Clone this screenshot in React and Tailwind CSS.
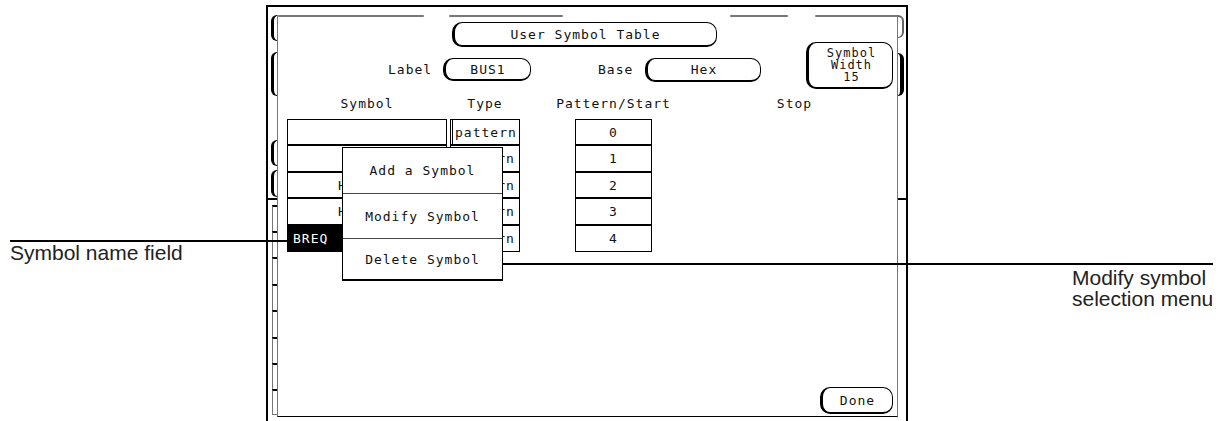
import React from 'react';

const screenFont = "font-['DejaVu_Sans_Mono',monospace] text-[13px] tracking-[1px] text-[#111] leading-none";

const Btn = ({ className = '', children }) => (
  <div className={`flex items-center justify-center rounded-[10px] border border-black border-l-[3px] border-b-2 ${className}`}>
    {children}
  </div>
);

const LeftGutter = () => {
  const boxes = [26, 26, 27, 26, 27, 26, 26, 26];
  return (
    <div className="w-[9px] flex flex-col">
      <div className="mt-[8px] ml-[3px] w-[6px] h-[26px] border-l-[3px] border-y border-black rounded-l-[8px]" />
      <div className="mt-[11px] ml-[3px] w-[6px] h-[44px] border-l-[3px] border-y border-black rounded-l-[8px]" />
      <div className="mt-[44px] ml-[3px] w-[6px] h-[26px] border-l-[3px] border-y border-black rounded-l-[8px]" />
      <div className="mt-[4px] ml-[3px] w-[6px] h-[27px] border-l-[3px] border-y border-black rounded-l-[8px]" />
      <div className="mt-[1px] h-[2px] w-[9px] bg-black" />
      <div className="mt-[5px] ml-[4px] flex flex-col">
        {boxes.map((h, i) => (
          <div
            key={i}
            className={`w-[6px] border-x border-[#777] border-t-2 border-t-black ${i === boxes.length - 1 ? 'border-b border-b-[#777]' : ''}`}
            style={{ height: h }}
          />
        ))}
      </div>
    </div>
  );
};

const RightGutter = () => (
  <div className="w-[8px] flex flex-col">
    <div className="mt-[8px] w-[6px] h-[23px] border-r-2 border-t-2 border-b border-[#666] rounded-r-[8px]" />
    <div className="mt-[15px] w-[6px] h-[43px] border-r-[4px] border-y border-black rounded-r-[9px]" />
    <div className="mt-[102px] h-[2px] w-[8px] bg-black" />
  </div>
);

const rowHeights = [26, 27, 26, 27, 27];

const symbols = ['', '', 'HLDA', 'HOLD', 'BREQ'];

const App = () => {
  return (
    <div className="relative w-[1229px] h-[421px] bg-white overflow-hidden">
      {/* instrument screen */}
      <div className="ml-[266px] mt-[5px] w-[642px] h-[420px] border-l-2 border-t-2 border-r-2 border-black flex">
        <LeftGutter />

        <div className={`mt-[8px] w-[621px] h-[402px] border-l border-r border-[#777] border-b border-b-black flex flex-col ${screenFont}`}>
          {/* tabs of the menu behind */}
          <div className="flex h-[2px]">
            <div className="w-[146px] bg-[#777] rounded-full" />
            <div className="ml-[25px] w-[115px] bg-[#777] rounded-full" />
            <div className="ml-[167px] w-[58px] bg-[#777] rounded-full" />
            <div className="ml-[27px] w-[82px] bg-[#777] rounded-l-full" />
          </div>

          {/* header */}
          <div className="flex">
            <div className="w-[528px] flex flex-col">
              <Btn className="mt-[5px] ml-[174px] w-[265px] h-[25px]">User Symbol Table</Btn>
              <div className="mt-[11px] flex items-center h-[23px]">
                <span className="ml-[110px] w-[55px]">Label</span>
                <Btn className="w-[88px] h-[23px]">BUS1</Btn>
                <span className="ml-[67px] w-[47px]">Base</span>
                <Btn className="w-[116px] h-[24px]">Hex</Btn>
              </div>
            </div>
            <Btn className="mt-[25px] w-[87px] h-[47px] flex-col text-[12px] leading-[12px] pl-[2px]">
              <span>Symbol</span>
              <span>Width</span>
              <span>15</span>
            </Btn>
          </div>

          {/* column headers */}
          <div className="mt-[7px] flex h-[14px] items-center">
            <div className="ml-[9px] w-[160px] flex justify-center whitespace-nowrap">Symbol</div>
            <div className="ml-[3px] w-[70px] flex justify-center whitespace-nowrap">Type</div>
            <div className="ml-[55px] w-[77px] flex justify-center whitespace-nowrap">Pattern/Start</div>
            <div className="ml-[104px] w-[77px] flex justify-center whitespace-nowrap">Stop</div>
          </div>

          {/* table */}
          <div className="mt-[9px] flex">
            <div className="ml-[9px] w-[160px] flex flex-col">
              {rowHeights.map((h, i) => (
                <div
                  key={i}
                  className={`flex items-center border border-black ${i === 4 ? 'bg-black text-white pl-[5px]' : 'pl-[50px]'}`}
                  style={{ height: h }}
                >
                  {symbols[i]}
                </div>
              ))}
            </div>
            <div className="ml-[3px] w-[70px] flex flex-col">
              {rowHeights.map((h, i) => (
                <div
                  key={i}
                  className={`flex items-center border border-black pl-[2px] ${i === 0 ? 'border-l-[3px] border-double' : ''}`}
                  style={{ height: h }}
                >
                  pattern
                </div>
              ))}
            </div>
            <div className="ml-[55px] w-[77px] flex flex-col">
              {rowHeights.map((h, i) => (
                <div key={i} className="flex items-center justify-center border border-black" style={{ height: h }}>
                  {i}
                </div>
              ))}
            </div>
          </div>

          <div className="flex-1" />
          <div className="flex justify-end mr-[4px] mb-[2px]">
            <Btn className="w-[73px] h-[27px]">Done</Btn>
          </div>
        </div>

        <RightGutter />
      </div>

      {/* pop-up menu */}
      <div className={`absolute left-[342px] top-[147px] w-[161px] h-[134px] bg-white border border-black border-b-2 flex flex-col ${screenFont}`}>
        <div className="h-[45px] flex items-center justify-center">Add a Symbol</div>
        <div className="h-[45px] flex items-center justify-center border-t border-[#444]">Modify Symbol</div>
        <div className="flex-1 flex items-center justify-center border-t border-[#444]">Delete Symbol</div>
      </div>

      {/* callouts */}
      <div className="absolute left-[10px] top-[240px] w-[277px] h-[2px] bg-black" />
      <div className="absolute left-[10px] top-[242px] font-['Liberation_Sans',Arial,sans-serif] text-[21px] leading-[21px] text-[#222]">
        Symbol name field
      </div>

      <div className="absolute left-[502px] top-[263px] w-[711px] h-[2px] bg-black" />
      <div className="absolute left-[1072px] top-[267px] font-['Liberation_Sans',Arial,sans-serif] text-[21px] leading-[21px] text-[#222]">
        <div>Modify symbol</div>
        <div>selection menu</div>
      </div>
    </div>
  );
};

export default App;
